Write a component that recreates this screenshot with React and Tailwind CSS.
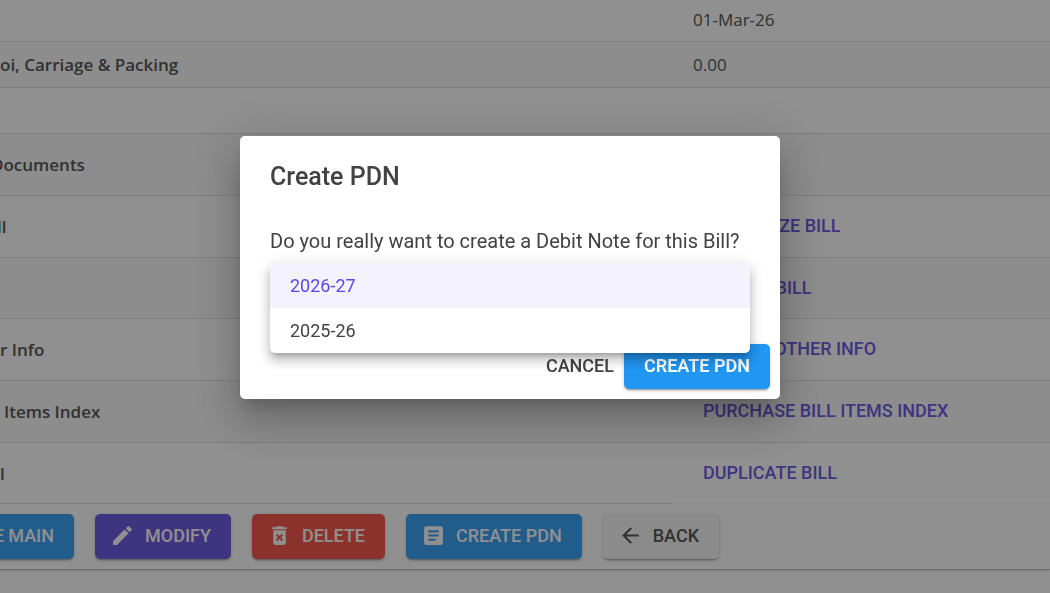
import React from "react";
import { MdEdit, MdDeleteForever, MdArticle, MdArrowBack } from "react-icons/md";

const rows = [
  { label: "", value: "01-Mar-26", height: "h-[45px]" },
  { label: "oi, Carriage & Packing", value: "0.00", height: "h-[46px]", striped: true },
  { label: "", value: "", height: "h-[46px]" },
  { label: "Documents", value: "", height: "h-[62px]", striped: true, shift: "-ml-[9px]" },
  { label: "ll", link: "AUTHORIZE BILL", height: "h-[62px]", shift: "-ml-[3px]" },
  { label: "", link: "CANCEL BILL", height: "h-[61px]", striped: true },
  { label: "r Info", link: "UPDATE OTHER INFO", height: "h-[62px]" },
  { label: "Items Index", link: "PURCHASE BILL ITEMS INDEX", height: "h-[62px]", striped: true, shift: "ml-1" },
  { label: "l", link: "DUPLICATE BILL", height: "h-[61px]" },
];

const raised = "shadow-[0_3px_1px_-2px_rgba(0,0,0,0.2),0_2px_2px_0_rgba(0,0,0,0.14),0_1px_5px_0_rgba(0,0,0,0.12)]";

function ActionButton({ icon: Icon, className, children }) {
  return (
    <button
      type="button"
      className={`flex h-[45px] shrink-0 items-center gap-[10px] rounded-[5px] px-5 pb-px text-lg ${raised} ${className}`}
    >
      {Icon && <Icon className="-ml-[5px] size-[25px]" />}
      {children}
    </button>
  );
}

function BillPage() {
  return (
    <main className="min-h-screen overflow-hidden bg-white pb-6 text-[#404040]">
      <div className="-mt-1 border-b border-[#b4b4b4] shadow-sm">
        <table className="w-full table-fixed border-collapse font-['Open_Sans',sans-serif] text-[17px]">
          <colgroup>
            <col className="w-[64%]" />
            <col />
          </colgroup>
          <tbody>
            {rows.map((row, i) => {
              const line = i === rows.length - 1 ? "border-[#f6f6f6]" : "border-[#dcdcdc]";
              return (
                <tr key={i} className={`${row.height} ${row.striped ? "bg-[#f8f8f8]" : "bg-white"}`}>
                  <th scope="row" className="border-b border-[#dcdcdc] p-0 pt-[2px] text-left font-semibold whitespace-nowrap">
                    <div className={row.shift}>{row.label}</div>
                  </th>
                  <td className={`border-b ${line} py-0 pr-5 pl-[21px] whitespace-nowrap`}>
                    {row.link ? (
                      <a href="#" className="px-[10px] font-[Roboto,sans-serif] text-lg font-medium text-[#5b46dc]">
                        {row.link}
                      </a>
                    ) : (
                      <div className="pt-[2px]">{row.value}</div>
                    )}
                  </td>
                </tr>
              );
            })}
          </tbody>
        </table>
        <div className="flex gap-[21px] py-[10px] font-[Roboto,sans-serif]">
          <ActionButton className="-ml-5 w-[94px] justify-end bg-[#2196f3] font-medium whitespace-nowrap text-white">
            E MAIN
          </ActionButton>
          <ActionButton icon={MdEdit} className="bg-[#5b46dc] font-medium text-white">MODIFY</ActionButton>
          <ActionButton icon={MdDeleteForever} className="bg-[#f44336] font-medium text-white">DELETE</ActionButton>
          <ActionButton icon={MdArticle} className="bg-[#2196f3] font-medium text-white">CREATE PDN</ActionButton>
          <ActionButton icon={MdArrowBack} className="bg-[#f5f5f5] font-medium">BACK</ActionButton>
        </div>
      </div>
    </main>
  );
}

function YearMenu() {
  return (
    <ul
      role="listbox"
      aria-label="Financial year"
      className="absolute inset-x-0 top-0 z-10 overflow-hidden rounded-[5px] bg-white text-lg shadow-[0_5px_5px_-3px_rgba(0,0,0,0.2),0_8px_10px_1px_rgba(0,0,0,0.14),0_3px_14px_2px_rgba(0,0,0,0.12)]"
    >
      <li role="option" aria-selected="true" className="flex h-[45px] items-center bg-[#f4f2fd] px-5 text-[#5b46ec]">
        2026-27
      </li>
      <li role="option" aria-selected="false" className="flex h-[45px] items-center px-5">
        2025-26
      </li>
    </ul>
  );
}

function CreateDialog() {
  return (
    <div className="fixed inset-0 flex items-start justify-center bg-[#212121]/50 pt-[136px] pr-[30px]">
      <section
        role="dialog"
        aria-modal="true"
        aria-labelledby="dialog-title"
        className="w-full max-w-[540px] rounded-[5px] bg-white font-[Roboto,sans-serif] text-[#424242] shadow-[0_11px_15px_-7px_rgba(0,0,0,0.2),0_24px_38px_3px_rgba(0,0,0,0.14),0_9px_46px_8px_rgba(0,0,0,0.12)]"
      >
        <h2 id="dialog-title" className="px-[30px] pt-[21px] text-[25px] leading-10 font-medium">
          Create PDN
        </h2>
        <p className="px-[30px] pt-[29px] text-[20px] leading-[30px] whitespace-nowrap">
          Do you really want to create a Debit Note for this Bill?
        </p>
        <div className="relative mx-[30px] mt-[7px] h-[81px]">
          <YearMenu />
        </div>
        <div className="flex items-center justify-end gap-[10px] px-[10px] pb-[10px]">
          <button type="button" className="h-[45px] pb-px text-lg font-medium">CANCEL</button>
          <ActionButton className="bg-[#2196f3] font-semibold text-white">CREATE PDN</ActionButton>
        </div>
      </section>
    </div>
  );
}

export default function App() {
  return (
    <>
      <BillPage />
      <CreateDialog />
    </>
  );
}
